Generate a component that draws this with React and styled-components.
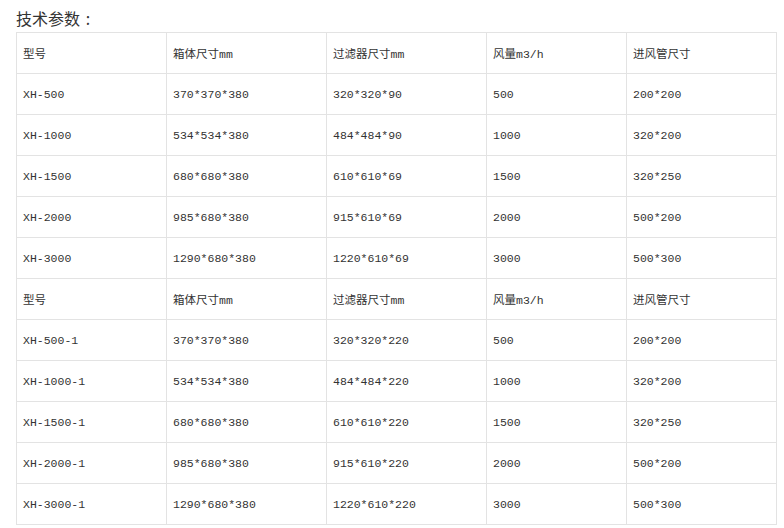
import React from 'react';
import styled, { createGlobalStyle } from 'styled-components';

const GlobalStyle = createGlobalStyle`
  body {
    margin: 0;
    background: #fff;
    color: #333;
  }
`;

const Wrapper = styled.div`
  padding: 6px 8px 0 16px;
`;

const Title = styled.h3`
  margin: 0 0 2px;
  font-family: "Noto Sans CJK SC", "Noto Sans", sans-serif;
  font-size: 16px;
  font-weight: normal;
  line-height: 24px;
  color: #333;
`;

const Colon = styled.span`
  display: inline-block;
  width: 16px;
  text-align: center;
`;

const Table = styled.table`
  border-collapse: collapse;
  table-layout: fixed;
  width: 760px;
  font-family: "Liberation Mono", "Noto Sans CJK SC", monospace;
  font-size: 11.5px;
  color: #333;
`;

const Col = styled.col`
  width: ${(p) => p.$w}px;
`;

const Cell = styled.td`
  height: 40px;
  padding: 0 6px;
  border: 1px solid #e3e3e3;
  text-align: left;
  vertical-align: middle;
  white-space: nowrap;
  overflow: hidden;
`;

const widths = [150, 160, 160, 140, 150];
const header = ['型号', '箱体尺寸mm', '过滤器尺寸mm', '风量m3/h', '进风管尺寸'];

const rows = [
  header,
  ['XH-500', '370*370*380', '320*320*90', '500', '200*200'],
  ['XH-1000', '534*534*380', '484*484*90', '1000', '320*200'],
  ['XH-1500', '680*680*380', '610*610*69', '1500', '320*250'],
  ['XH-2000', '985*680*380', '915*610*69', '2000', '500*200'],
  ['XH-3000', '1290*680*380', '1220*610*69', '3000', '500*300'],
  header,
  ['XH-500-1', '370*370*380', '320*320*220', '500', '200*200'],
  ['XH-1000-1', '534*534*380', '484*484*220', '1000', '320*200'],
  ['XH-1500-1', '680*680*380', '610*610*220', '1500', '320*250'],
  ['XH-2000-1', '985*680*380', '915*610*220', '2000', '500*200'],
  ['XH-3000-1', '1290*680*380', '1220*610*220', '3000', '500*300'],
];

export default function App() {
  return (
    <Wrapper>
      <GlobalStyle />
      <Title>技术参数<Colon>:</Colon></Title>
      <Table>
        <colgroup>
          {widths.map((w, i) => (
            <Col key={i} $w={w} />
          ))}
        </colgroup>
        <tbody>
          {rows.map((row, i) => (
            <tr key={i}>
              {row.map((cell, j) => (
                <Cell key={j}>{cell}</Cell>
              ))}
            </tr>
          ))}
        </tbody>
      </Table>
    </Wrapper>
  );
}
